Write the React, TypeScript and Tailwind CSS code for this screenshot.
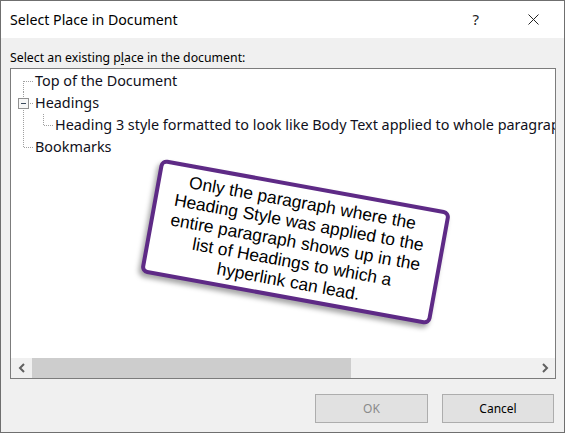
import type { ReactNode } from 'react';

const ui = { fontFamily: '"Segoe UI", "Noto Sans", sans-serif' };
const dots = { stroke: '#a0a0a0', strokeWidth: 1, strokeDasharray: '1 1', shapeRendering: 'crispEdges' as const };

// ─── Tree connector pieces ────────────────────────────────────────────────────

type Kind = 'first' | 'expander' | 'through' | 'last' | 'child';

function Connector({ kind }: { kind: Kind }) {
  if (kind === 'child') {
    return (
      <svg width="44" height="22" className="shrink-0">
        <line x1="12.5" y1="0" x2="12.5" y2="22" style={dots} />
        <line x1="32.5" y1="0" x2="32.5" y2="11" style={dots} />
        <line x1="33" y1="11.5" x2="42" y2="11.5" style={dots} />
      </svg>
    );
  }
  return (
    <svg width="24" height="22" className="shrink-0">
      {kind === 'first' && <line x1="12.5" y1="11" x2="12.5" y2="22" style={dots} />}
      {kind === 'last' && <line x1="12.5" y1="0" x2="12.5" y2="11" style={dots} />}
      {kind === 'expander' && <line x1="12.5" y1="0" x2="12.5" y2="22" style={dots} />}
      <line x1="13" y1="11.5" x2="22" y2="11.5" style={dots} />
      {kind === 'expander' && (
        <g shapeRendering="crispEdges">
          <rect x="7.5" y="6.5" width="10" height="10" fill="#f7f7f7" stroke="#919191" />
          <line x1="10" y1="11.5" x2="15" y2="11.5" stroke="#3b4a5c" />
        </g>
      )}
    </svg>
  );
}

function Row({ kind, children }: { kind: Kind; children: ReactNode }) {
  return (
    <div className="flex h-[22px] items-center whitespace-nowrap">
      <Connector kind={kind} />
      <span className="text-[14.4px] leading-[22px] text-[#101020]">{children}</span>
    </div>
  );
}

// ─── Scrollbar ────────────────────────────────────────────────────────────────

function HScrollBar() {
  return (
    <div className="flex h-[20px] bg-[#f0f0f0]">
      <div className="flex w-[21px] items-center justify-center">
        <svg width="8" height="10" viewBox="0 0 8 10">
          <path d="M6 1 L2 5 L6 9" fill="none" stroke="#606060" strokeWidth="2" />
        </svg>
      </div>
      <div className="w-[319px] bg-[#cdcdcd]" />
      <div className="flex-1" />
      <div className="flex w-[21px] items-center justify-center">
        <svg width="8" height="10" viewBox="0 0 8 10">
          <path d="M2 1 L6 5 L2 9" fill="none" stroke="#606060" strokeWidth="2" />
        </svg>
      </div>
    </div>
  );
}

// ─── Callout ──────────────────────────────────────────────────────────────────

function Callout() {
  return (
    <div
      className="absolute left-[147px] top-[183px] flex h-[116px] w-[295px] rotate-[10.3deg] items-center justify-center rounded-[7px] border-[4px] border-[#5e2a86] bg-white shadow-[-2px_4px_5px_rgba(0,0,0,0.35)]"
      style={{ fontFamily: '"Liberation Sans", Arial, sans-serif' }}
    >
      <p className="text-center text-[17.4px] leading-[20px] text-black">
        Only the paragraph where the
        <br />
        Heading Style was applied to the
        <br />
        entire paragraph shows up in the
        <br />
        list of Headings to which a
        <br />
        hyperlink can lead.
      </p>
    </div>
  );
}

// ─── Dialog ───────────────────────────────────────────────────────────────────

export default function App() {
  return (
    <div className="relative flex h-[433px] w-[565px] flex-col border border-[#6f6f6f] bg-[#f0f0f0]" style={ui}>
      <div className="flex h-[37px] items-center bg-white pl-[9px]">
        <span className="text-[14.2px] text-black">Select Place in Document</span>
        <span className="ml-auto mr-[49px] text-[15px] text-[#222]">?</span>
        <svg width="11" height="11" viewBox="0 0 11 11" className="mr-[25px]">
          <path d="M0.5 0.5 L10.5 10.5 M10.5 0.5 L0.5 10.5" stroke="#222" strokeWidth="1" />
        </svg>
      </div>

      <div className="flex flex-1 flex-col px-[9px]">
        <div className="pt-[10px] text-[12.3px] leading-[19px] text-black">
          Select an existing p<u className="underline-offset-2">l</u>ace in the document:
        </div>

        <div className="mt-[1px] flex h-[311px] w-[546px] flex-col border border-[#7c7c7c] bg-white">
          <div className="flex-1 overflow-hidden pt-[1px]">
            <Row kind="first">Top of the Document</Row>
            <Row kind="expander">Headings</Row>
            <Row kind="child">Heading 3 style formatted to look like Body Text applied to whole paragraph</Row>
            <Row kind="last">Bookmarks</Row>
          </div>
          <HScrollBar />
        </div>

        <div className="mt-[15px] flex justify-end gap-[14px] pr-[1px]">
          <button className="h-[29px] w-[113px] border border-[#adadad] bg-[#e1e1e1] text-[12px] text-[#8a8a8a]">
            OK
          </button>
          <button className="h-[29px] w-[112px] border border-[#adadad] bg-[#e1e1e1] text-[12px] text-black">
            Cancel
          </button>
        </div>
      </div>

      <Callout />
    </div>
  );
}
